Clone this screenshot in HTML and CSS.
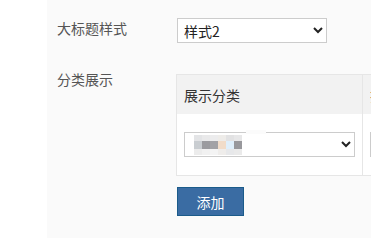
FILE: index.html
```html
<!DOCTYPE html>
<html lang="zh-CN">
<head>
    <meta charset="UTF-8">
    <meta name="viewport" content="width=device-width, initial-scale=1.0">
    <title>大标题设置</title>
    <link rel="stylesheet" href="styles.css">
</head>
<body>
    <div class="layout">
        <!-- Left gutter -->
        <aside class="sidebar"></aside>

        <!-- Settings form -->
        <main class="panel">
            <div class="form-row">
                <label class="form-label">大标题样式</label>
                <div class="form-control">
                    <select class="select select-style">
                        <option>样式2</option>
                        <option>样式1</option>
                    </select>
                </div>
            </div>

            <div class="form-row">
                <label class="form-label form-label-top">分类展示</label>
                <div class="form-control">
                    <table class="cat-table">
                        <thead>
                            <tr>
                                <th>展示分类</th>
                                <th>排序</th>
                            </tr>
                        </thead>
                        <tbody>
                            <tr>
                                <td>
                                    <div class="select-wrap">
                                        <select class="select select-cat">
                                            <option></option>
                                        </select>
                                        <!-- blurred category name -->
                                        <span class="mosaic">
                                            <i style="background:#e3e4e6"></i><i style="background:#e9e9ea"></i><i style="background:#ececed"></i><i style="background:#eeece9"></i><i style="background:#e2e2e3"></i><i style="background:#e7e7e8"></i>
                                            <i style="background:#c9cdd1"></i><i style="background:#9b9b9f"></i><i style="background:#a2a2a6"></i><i style="background:#f1dcc9"></i><i style="background:#dfeffb"></i><i style="background:#98989c"></i>
                                            <i style="background:#ececec"></i><i style="background:#f1f1f1"></i><i style="background:#f4f4f4"></i><i style="background:#efedeb"></i><i style="background:#e7e8ea"></i><i style="background:#eaeaea"></i>
                                        </span>
                                        <span class="mosaic-bar"></span>
                                    </div>
                                </td>
                                <td>
                                    <select class="select select-cat">
                                        <option></option>
                                    </select>
                                </td>
                            </tr>
                        </tbody>
                    </table>
                    <button class="btn-add">添加</button>
                </div>
            </div>
        </main>
    </div>
</body>
</html>
```

FILE: styles.css
```css
/* General body styling */
body {
    margin: 0;
    padding: 0;
    font-family: "Noto Sans CJK SC", "Noto Sans", sans-serif;
    font-size: 14px;
    color: #333;
    background-color: #fff;
    overflow: hidden;
}

.layout {
    display: flex;
    height: 238px;
}

.sidebar {
    width: 47px;
    flex-shrink: 0;
    background-color: #fff;
}

/* Form panel */
.panel {
    flex: 1;
    min-width: 0;
    background-color: #fafafa;
    padding: 18px 0 0 10px;
    overflow: hidden;
}

.form-row {
    display: flex;
    align-items: flex-start;
    margin-bottom: 31px;
}

.form-label {
    width: 120px;
    flex-shrink: 0;
    line-height: 20px;
    color: #555;
}

.form-label-top {
    margin-top: -5px;
}

.form-control {
    display: flex;
    flex-direction: column;
    align-items: flex-start;
}

/* Selects */
.select {
    height: 25px;
    border: 1px solid #ccc;
    border-radius: 0;
    background-color: #fff;
    font-family: inherit;
    font-size: 14px;
    color: #222;
    padding: 0 2px;
}

.select-style {
    width: 150px;
}

.select-cat {
    width: 171px;
}

.select-wrap {
    position: relative;
}

.mosaic {
    position: absolute;
    left: 10px;
    top: 3px;
    display: grid;
    grid-template-columns: 8px 8px 8px 8px 8px 8px;
    grid-template-rows: 6px 8px 6px;
}

.mosaic i {
    display: block;
}

.mosaic-bar {
    position: absolute;
    left: 62px;
    top: -2px;
    width: 20px;
    height: 4px;
    background-color: #fbfbfb;
}

/* Category table */
.cat-table {
    margin-left: -1px;
    border-collapse: collapse;
    background-color: #fff;
    border: 1px solid #e6e6e6;
}

.cat-table th,
.cat-table td {
    padding: 0 7px;
    border-right: 1px solid #e6e6e6;
    text-align: left;
    white-space: nowrap;
}

.cat-table th {
    height: 39px;
    font-weight: normal;
    color: #333;
    background-color: #f2f2f2;
}

.cat-table td {
    height: 61px;
}

/* Add button */
.btn-add {
    margin-top: 11px;
    width: 67px;
    height: 29px;
    border: 1px solid #1b5b8a;
    background-color: #3a6ca3;
    color: #fff;
    font-family: inherit;
    font-size: 14px;
    cursor: pointer;
}
```
